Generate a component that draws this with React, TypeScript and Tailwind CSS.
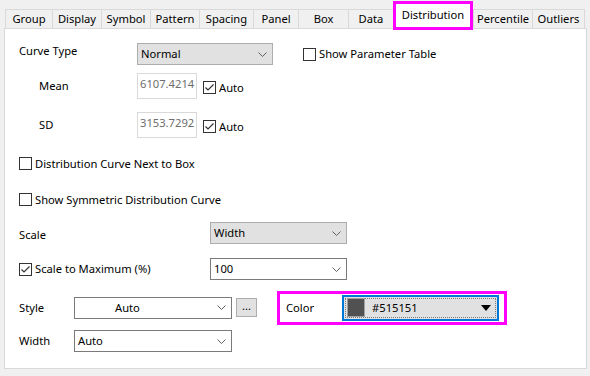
import React from "react";

const tabs = [
  { label: "Group", w: 47 },
  { label: "Display", w: 49 },
  { label: "Symbol", w: 49 },
  { label: "Pattern", w: 49 },
  { label: "Spacing", w: 54 },
  { label: "Panel", w: 45 },
  { label: "Box", w: 50 },
  { label: "Data", w: 45 },
  { label: "Distribution", w: 80, active: true },
  { label: "Percentile", w: 59 },
  { label: "Outliers", w: 53 },
];

function Chevron() {
  return (
    <svg width="9" height="5" viewBox="0 0 9 5" className="shrink-0">
      <path d="M0.5 0.5 L4.5 4.5 L8.5 0.5" fill="none" stroke="#606060" strokeWidth="1" />
    </svg>
  );
}

function Checkbox({ checked }: { checked?: boolean }) {
  return (
    <div className="w-[13px] h-[13px] border border-[#333333] bg-white shrink-0 flex items-center justify-center">
      {checked && (
        <svg width="11" height="11" viewBox="0 0 11 11">
          <path d="M1.5 5.5 L4 8 L9.5 2.5" fill="none" stroke="#333333" strokeWidth="1.2" />
        </svg>
      )}
    </div>
  );
}

function Select({ value, w, gray, center }: { value: string; w: string; gray?: boolean; center?: boolean }) {
  return (
    <div
      className={`${w} h-[22px] flex items-center pr-[5px] border ${
        gray ? "bg-[#e1e1e1] border-[#adadad]" : "bg-white border-[#7a7a7a]"
      }`}
    >
      <span className={`flex-1 ${center ? "pl-[40px]" : "pl-[3px]"} text-black`}>{value}</span>
      <Chevron />
    </div>
  );
}

function CheckRow({ label, checked }: { label: string; checked?: boolean }) {
  return (
    <div className="flex items-center gap-[3px]">
      <Checkbox checked={checked} />
      <span>{label}</span>
    </div>
  );
}

export default function App() {
  return (
    <div
      className="w-[590px] h-[376px] bg-[#f0f0f0] text-[11.2px] text-black leading-none"
      style={{ fontFamily: '"Segoe UI", "Noto Sans", sans-serif' }}
    >
      {/* Tab strip */}
      <div className="flex items-end h-[28px] pl-[5px]">
        {tabs.map((t) =>
          t.active ? (
            <div
              key={t.label}
              className="relative z-10 h-[29px] -mb-[2px] border-[3px] border-[#ff00ff] bg-white flex items-start justify-center pt-[5px]"
              style={{ width: t.w }}
            >
              {t.label}
            </div>
          ) : (
            <div
              key={t.label}
              className="h-[19px] border border-r-0 last:border-r border-b-0 border-[#d9d9d9] bg-[#f0f0f0] flex items-center justify-center"
              style={{ width: t.w }}
            >
              {t.label}
            </div>
          )
        )}
      </div>

      {/* Panel */}
      <div className="ml-[4px] w-[583px] h-[341px] border border-[#d9d9d9] bg-white pl-[14px] pt-[14px]">
        {/* Curve type */}
        <div className="flex items-center h-[22px]">
          <span className="w-[118px] -mt-[6px]">Curve Type</span>
          <Select value="Normal" w="w-[136px]" gray />
          <div className="ml-[30px]">
            <CheckRow label="Show Parameter Table" />
          </div>
        </div>

        {/* Mean */}
        <div className="flex items-center h-[26px] mt-[8px]">
          <span className="w-[118px] pl-[20px]">Mean</span>
          <div className="w-[60px] h-[26px] border border-[#d9d9d9] pl-[2px] pt-[4px] text-[#6d6d6d] overflow-hidden whitespace-nowrap">
            6107.4214
          </div>
          <div className="ml-[6px] mt-[3px]">
            <CheckRow label="Auto" checked />
          </div>
        </div>

        {/* SD */}
        <div className="flex items-center h-[26px] mt-[13px]">
          <span className="w-[118px] pl-[20px]">SD</span>
          <div className="w-[60px] h-[26px] border border-[#d9d9d9] pl-[2px] pt-[4px] text-[#6d6d6d] overflow-hidden whitespace-nowrap">
            3153.7292
          </div>
          <div className="ml-[6px] mt-[3px]">
            <CheckRow label="Auto" checked />
          </div>
        </div>

        <div className="h-[13px] mt-[19px] flex items-center">
          <CheckRow label="Distribution Curve Next to Box" />
        </div>
        <div className="h-[13px] mt-[23px] flex items-center">
          <CheckRow label="Show Symmetric Distribution Curve" />
        </div>

        {/* Scale */}
        <div className="flex items-center h-[22px] mt-[16px]">
          <span className="w-[191px] mt-[4px]">Scale</span>
          <Select value="Width" w="w-[137px]" gray />
        </div>

        {/* Scale to maximum */}
        <div className="flex items-center h-[22px] mt-[14px]">
          <div className="w-[191px]">
            <CheckRow label="Scale to Maximum (%)" checked />
          </div>
          <Select value="100" w="w-[137px]" />
        </div>

        {/* Style + Color */}
        <div className="flex items-center h-[33px] mt-[11px]">
          <span className="w-[55px]">Style</span>
          <Select value="Auto" w="w-[158px]" center />
          <div className="ml-[4px] w-[21px] h-[19px] bg-[#e1e1e1] border border-[#adadad] flex items-center justify-center pb-[4px]">
            ...
          </div>
          <div className="ml-[20px] w-[230px] h-[34px] border-[3px] border-[#ff00ff] flex items-center pl-[6px]">
            <span className="w-[56px]">Color</span>
            <div className="w-[157px] h-[26px] border-2 border-[#0078d7] bg-[#e1e1e1] p-[1px]">
              <div className="h-full border border-dotted border-[#7a7a7a] flex items-center pl-[1px] pr-[4px]">
                <div className="w-[18px] h-[19px] bg-[#515151] border border-[#a0a0a0]" />
                <span className="ml-[7px] flex-1">#515151</span>
                <svg width="10" height="6" viewBox="0 0 10 6">
                  <path d="M0 0 H10 L5 6 Z" fill="#000" />
                </svg>
              </div>
            </div>
          </div>
        </div>

        {/* Width */}
        <div className="flex items-center h-[22px] mt-[6px]">
          <span className="w-[55px]">Width</span>
          <Select value="Auto" w="w-[158px]" />
        </div>
      </div>
    </div>
  );
}
